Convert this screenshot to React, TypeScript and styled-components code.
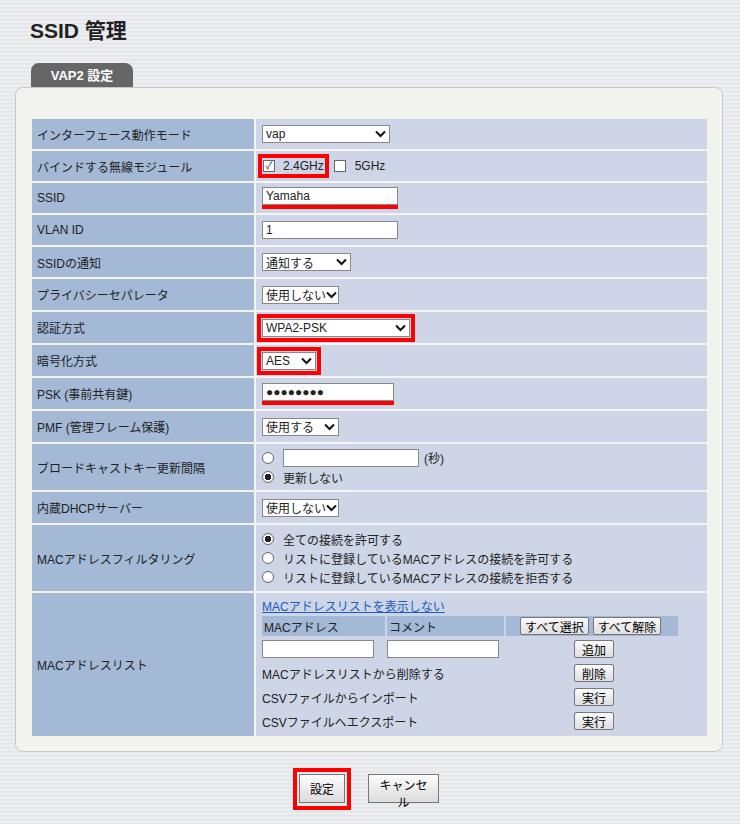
import React from "react";
import styled, { createGlobalStyle } from "styled-components";

const Global = createGlobalStyle`
  body {
    margin: 0;
    font-family: "Liberation Sans", "Noto Sans CJK JP", sans-serif;
    font-size: 12px;
    color: #222;
    background: repeating-linear-gradient(180deg, #e6e8ec 0px, #eef0f2 2px, #dfe2e6 4px);
  }
`;

const Page = styled.div`
  width: 740px;
  height: 824px;
  padding: 16px 0 0 0;
  box-sizing: border-box;
`;

const Title = styled.h1`
  margin: 0 0 0 30px;
  font-size: 21px;
  font-weight: bold;
  height: 30px;
  line-height: 30px;
`;

const Tab = styled.div`
  margin: 17px 0 0 31px;
  width: 102px;
  height: 24px;
  line-height: 26px;
  background: #666;
  color: #fff;
  font-weight: bold;
  font-size: 13px;
  text-align: center;
  border-radius: 8px 8px 0 0;
`;

const Panel = styled.div`
  margin: 0 17px 0 15px;
  background: #f2f2ee;
  border: 1px solid #c9c9c4;
  border-radius: 8px;
  padding: 31px 15px 15px 16px;
`;

const Table = styled.div`
  display: grid;
  grid-template-columns: 222px 1fr;
  gap: 2px;
  background: #f4f4f6;
`;

const Label = styled.div<{ $h: number }>`
  background: #a3b9d6;
  height: ${(p) => p.$h}px;
  display: flex;
  align-items: center;
  padding-left: 5px;
`;

const Value = styled.div<{ $h: number }>`
  background: #cdd5e6;
  height: ${(p) => p.$h}px;
  display: flex;
  flex-direction: column;
  justify-content: center;
  padding-left: 6px;
  gap: 2px;
`;

const Line = styled.div`
  display: flex;
  align-items: center;
  gap: 5px;
  white-space: nowrap;
`;

const Select = styled.div<{ $w: number }>`
  width: ${(p) => p.$w}px;
  height: 18px;
  box-sizing: border-box;
  background: #fff;
  border: 1px solid #888;
  display: flex;
  align-items: center;
  justify-content: space-between;
  padding: 0 3px;
  font-size: 12px;
  white-space: nowrap;
  overflow: hidden;
`;

const Input = styled.div<{ $w: number }>`
  width: ${(p) => p.$w}px;
  height: 18px;
  box-sizing: border-box;
  background: #fff;
  border: 1px solid #888;
  padding: 0 3px;
  line-height: 16px;
`;

const RedBox = styled.div`
  border: 4px solid #f00;
  padding: 1px;
  display: inline-flex;
  align-items: center;
  gap: 4px;
`;

const RedUnder = styled.div`
  border-bottom: 4px solid #f00;
  display: inline-block;
`;

const Check = styled.span`
  width: 10px;
  height: 10px;
  border: 1px solid #666;
  background: #fff;
  font-size: 10px;
  line-height: 10px;
  text-align: center;
  margin-right: 4px;
`;

const Radio = styled.span<{ $on?: boolean }>`
  width: 10px;
  height: 10px;
  border-radius: 50%;
  border: 1px solid #666;
  background: ${(p) => (p.$on ? "radial-gradient(circle, #222 0 3px, #fff 3.5px)" : "#fff")};
  margin-right: 4px;
  flex: none;
`;

const Btn = styled.button`
  font: inherit;
  font-size: 12px;
  height: 18px;
  padding: 0 4px;
  white-space: nowrap;
  background: linear-gradient(#fbfbfb, #dedede);
  border: 1px solid #777;
  border-radius: 2px;
`;

const Link = styled.a`
  color: #1a5bbf;
  text-decoration: underline;
`;

const MacHead = styled.div`
  display: grid;
  grid-template-columns: 123px 117px 172px;
  gap: 2px;
  width: 416px;
`;

const MacCell = styled.div`
  background: #a3b9d6;
  height: 20px;
  display: flex;
  align-items: center;
  padding-left: 2px;
  gap: 4px;
`;

const MacRow = styled.div<{ $cols: string }>`
  display: grid;
  grid-template-columns: ${(p) => p.$cols};
  align-items: center;
  height: 22px;
`;

const Footer = styled.div`
  display: flex;
  justify-content: center;
  gap: 17px;
  margin-top: 16px;
  margin-left: -8px;
`;

const BigBtn = styled.button<{ $w: number }>`
  font: inherit;
  font-size: 12px;
  height: 29px;
  width: ${(p) => p.$w}px;
  background: linear-gradient(#fcfcfc, #dcdcdc);
  border: 1px solid #777;
`;

const BigRed = styled.div`
  border: 4px solid #f00;
  padding: 2px;
`;

const Arrow = () => (
  <svg width="11" height="8" viewBox="0 0 11 8" style={{ flex: "none" }}>
    <path d="M1 1.5 5.5 6 10 1.5" stroke="#111" strokeWidth="2" fill="none" />
  </svg>
);

const Sel = ({ w, v }: { w: number; v: string }) => (
  <Select $w={w}>
    <span>{v}</span>
    <Arrow />
  </Select>
);

export default function App() {
  return (
    <Page>
      <Global />
      <Title>SSID 管理</Title>
      <Tab>VAP2 設定</Tab>
      <Panel>
        <Table>
          <Label $h={30}>インターフェース動作モード</Label>
          <Value $h={30}><Line><Sel w={128} v="vap" /></Line></Value>

          <Label $h={30}>バインドする無線モジュール</Label>
          <Value $h={30}>
            <Line style={{ marginLeft: -4 }}>
              <RedBox><Check>✓</Check>2.4GHz</RedBox>
              <Check />5GHz
            </Line>
          </Value>

          <Label $h={30}>SSID</Label>
          <Value $h={30}><Line><RedUnder><Input $w={136}>Yamaha</Input></RedUnder></Line></Value>

          <Label $h={30}>VLAN ID</Label>
          <Value $h={30}><Line><Input $w={136}>1</Input></Line></Value>

          <Label $h={30}>SSIDの通知</Label>
          <Value $h={30}><Line><Sel w={89} v="通知する" /></Line></Value>

          <Label $h={31}>プライバシーセパレータ</Label>
          <Value $h={31}><Line><Sel w={77} v="使用しない" /></Line></Value>

          <Label $h={31}>認証方式</Label>
          <Value $h={31}><Line style={{ marginLeft: -5 }}><RedBox><Sel w={148} v="WPA2-PSK" /></RedBox></Line></Value>

          <Label $h={31}>暗号化方式</Label>
          <Value $h={31}><Line style={{ marginLeft: -5 }}><RedBox><Sel w={54} v="AES" /></RedBox></Line></Value>

          <Label $h={31}>PSK (事前共有鍵)</Label>
          <Value $h={31}><Line><RedUnder><Input $w={132}>●●●●●●●●</Input></RedUnder></Line></Value>

          <Label $h={31}>PMF (管理フレーム保護)</Label>
          <Value $h={31}><Line><Sel w={77} v="使用する" /></Line></Value>

          <Label $h={46}>ブロードキャストキー更新間隔</Label>
          <Value $h={46}>
            <Line><Radio /> <Input $w={136} /> (秒)</Line>
            <Line><Radio $on />更新しない</Line>
          </Value>

          <Label $h={31}>内蔵DHCPサーバー</Label>
          <Value $h={31}><Line><Sel w={77} v="使用しない" /></Line></Value>

          <Label $h={66}>MACアドレスフィルタリング</Label>
          <Value $h={66}>
            <Line><Radio $on />全ての接続を許可する</Line>
            <Line><Radio />リストに登録しているMACアドレスの接続を許可する</Line>
            <Line><Radio />リストに登録しているMACアドレスの接続を拒否する</Line>
          </Value>

          <Label $h={143}>MACアドレスリスト</Label>
          <Value $h={143}>
            <Link>MACアドレスリストを表示しない</Link>
            <MacHead>
              <MacCell>MACアドレス</MacCell>
              <MacCell>コメント</MacCell>
              <MacCell style={{ paddingLeft: 14 }}><Btn>すべて選択</Btn><Btn>すべて解除</Btn></MacCell>
            </MacHead>
            <MacRow $cols="125px 187px 40px">
              <Input $w={112} />
              <Input $w={112} />
              <Btn>追加</Btn>
            </MacRow>
            <MacRow $cols="312px 40px"><span>MACアドレスリストから削除する</span><Btn>削除</Btn></MacRow>
            <MacRow $cols="312px 40px"><span>CSVファイルからインポート</span><Btn>実行</Btn></MacRow>
            <MacRow $cols="312px 40px"><span>CSVファイルへエクスポート</span><Btn>実行</Btn></MacRow>
          </Value>
        </Table>
      </Panel>
      <Footer>
        <BigRed><BigBtn $w={46}>設定</BigBtn></BigRed>
        <div style={{ paddingTop: 6 }}><BigBtn $w={71}>キャンセル</BigBtn></div>
      </Footer>
    </Page>
  );
}
